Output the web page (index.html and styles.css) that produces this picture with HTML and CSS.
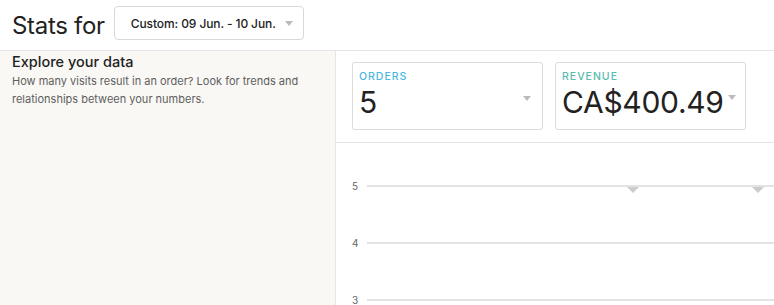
FILE: index.html
```html
<!DOCTYPE html>
<html>
<head>
  <title>Stats</title>
  <link rel="stylesheet" href="styles.css">
</head>
<body>
  <div class="header">
    <h1>Stats for</h1>
    <div class="range-select">
      <span>Custom: 09 Jun. - 10 Jun.</span>
      <span class="caret"></span>
    </div>
  </div>

  <div class="main">
    <div class="side">
      <h2>Explore your data</h2>
      <p>How many visits result in an order? Look for trends and relationships between your numbers.</p>
    </div>

    <div class="content">
      <div class="metrics">
        <div class="metric">
          <div class="metric-label orders">ORDERS</div>
          <div class="metric-value">5</div>
          <span class="caret"></span>
        </div>
        <div class="metric">
          <div class="metric-label revenue">REVENUE</div>
          <div class="metric-value">CA$400.49</div>
          <span class="caret"></span>
        </div>
      </div>

      <div class="chart">
        <div class="grid-row">
          <span class="tick">5</span>
          <div class="grid-line">
            <span class="marker" style="left: 260px"></span>
            <span class="marker" style="left: 385px"></span>
          </div>
        </div>
        <div class="grid-row">
          <span class="tick">4</span>
          <div class="grid-line"></div>
        </div>
        <div class="grid-row">
          <span class="tick">3</span>
          <div class="grid-line"></div>
        </div>
      </div>
    </div>
  </div>
</body>
</html>
```

FILE: styles.css
```css
body {
  margin: 0;
  font-family: Inter, "Liberation Sans", sans-serif;
  color: #222;
  background: #fff;
  overflow: hidden;
}
.header {
  display: flex;
  align-items: center;
  height: 51px;
  padding: 0 12px;
  border-bottom: 1px solid #e5e5e5;
  box-sizing: border-box;
}
.header h1 {
  margin: 0 9px 0 0;
  font-size: 24px;
  font-weight: 400;
  letter-spacing: -0.3px;
}
.range-select {
  display: flex;
  align-items: center;
  width: 190px;
  height: 34px;
  margin-top: -4px;
  padding: 0 10px 0 16px;
  box-sizing: border-box;
  border: 1px solid #d8d8d8;
  border-radius: 4px;
  font-size: 12px;
  font-weight: 500;
  letter-spacing: -0.1px;
}
.range-select .caret {
  margin-left: auto;
}
.caret {
  display: inline-block;
  width: 0;
  height: 0;
  border-left: 4px solid transparent;
  border-right: 4px solid transparent;
  border-top: 5px solid #bbb;
}
.main {
  display: flex;
  height: 254px;
  overflow: hidden;
}
.side {
  width: 336px;
  flex-shrink: 0;
  background: #f9f8f5;
  border-right: 1px solid #e5e5e5;
  padding: 1px 12px 0;
  box-sizing: border-box;
}
.side h2 {
  margin: 0;
  font-size: 14.5px;
  font-weight: 500;
  line-height: 20px;
}
.side p {
  margin: 0;
  font-size: 11px;
  line-height: 18px;
  color: #5e5e5e;
}
.content {
  flex: 1;
  overflow: hidden;
}
.metrics {
  display: flex;
  gap: 12px;
  padding: 11px 16px 12px;
  border-bottom: 1px solid #e5e5e5;
}
.metric {
  position: relative;
  width: 191px;
  height: 68px;
  box-sizing: border-box;
  border: 1px solid #dcdcdc;
  border-radius: 3px;
  padding: 7px 6px 0;
}
.metric .caret {
  position: absolute;
  right: 11px;
  top: 33px;
}
.metric:last-child .caret {
  right: 9px;
  top: 32px;
}
.metric-label {
  font-size: 10.5px;
  font-weight: 500;
  letter-spacing: 1px;
  line-height: 14px;
}
.orders {
  color: #4ab7e0;
}
.revenue {
  color: #59bcae;
}
.metric-value {
  font-size: 30px;
  line-height: 36px;
  letter-spacing: -0.3px;
}
.chart {
  height: 110px;
  padding: 14px 0 0 16px;
}
.grid-row {
  display: flex;
  align-items: center;
  height: 57px;
}
.tick {
  width: 15px;
  font-size: 10px;
  color: #666;
}
.grid-line {
  position: relative;
  flex: 1;
  height: 2px;
  background: #e3e3e3;
}
.marker {
  position: absolute;
  top: 2px;
  width: 0;
  height: 0;
  border-left: 6px solid transparent;
  border-right: 6px solid transparent;
  border-top: 6px solid #ccc;
}
```
